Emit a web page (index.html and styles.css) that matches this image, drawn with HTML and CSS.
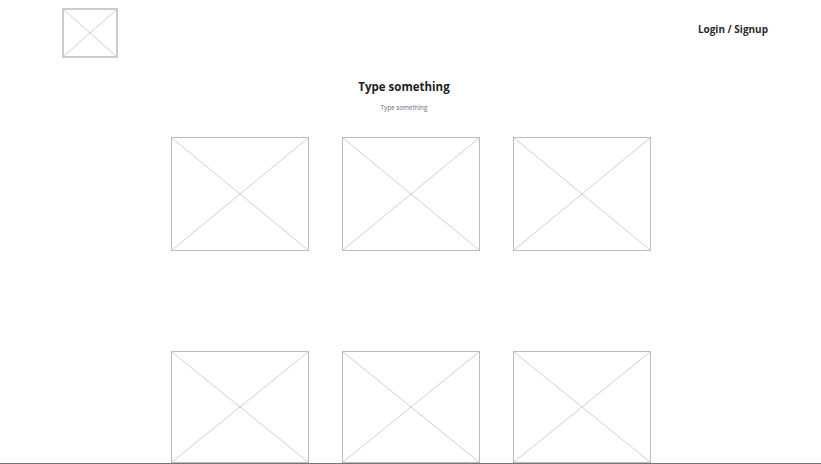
FILE: index.html
```html
<!DOCTYPE html>
<html>
<head>
<meta charset="utf-8">
<link rel="stylesheet" href="styles.css">
</head>
<body>
<header class="header">
  <div class="logo ph">
    <svg viewBox="0 0 100 100" preserveAspectRatio="none"><line x1="0" y1="0" x2="100" y2="100"/><line x1="100" y1="0" x2="0" y2="100"/></svg>
  </div>
  <a class="login">Login / Signup</a>
</header>
<section class="intro">
  <h1 class="title">Type something</h1>
  <p class="sub">Type something</p>
</section>
<section class="grid">
  <div class="card ph"><svg viewBox="0 0 100 100" preserveAspectRatio="none"><line x1="0" y1="0" x2="100" y2="100"/><line x1="100" y1="0" x2="0" y2="100"/></svg></div>
  <div class="card ph"><svg viewBox="0 0 100 100" preserveAspectRatio="none"><line x1="0" y1="0" x2="100" y2="100"/><line x1="100" y1="0" x2="0" y2="100"/></svg></div>
  <div class="card ph"><svg viewBox="0 0 100 100" preserveAspectRatio="none"><line x1="0" y1="0" x2="100" y2="100"/><line x1="100" y1="0" x2="0" y2="100"/></svg></div>
  <div class="card ph low"><svg viewBox="0 0 100 100" preserveAspectRatio="none"><line x1="0" y1="0" x2="100" y2="100"/><line x1="100" y1="0" x2="0" y2="100"/></svg></div>
  <div class="card ph low"><svg viewBox="0 0 100 100" preserveAspectRatio="none"><line x1="0" y1="0" x2="100" y2="100"/><line x1="100" y1="0" x2="0" y2="100"/></svg></div>
  <div class="card ph low"><svg viewBox="0 0 100 100" preserveAspectRatio="none"><line x1="0" y1="0" x2="100" y2="100"/><line x1="100" y1="0" x2="0" y2="100"/></svg></div>
</section>
<div class="rule"></div>
</body>
</html>
```
FILE: styles.css
```css
html, body {
  margin: 0;
  padding: 0;
  background: #fff;
  font-family: "Open Sans", "Noto Sans", sans-serif;
  color: #222;
}
body {
  height: 464px;
  overflow: hidden;
}
.header {
  display: flex;
  justify-content: space-between;
  align-items: flex-start;
  padding: 8px 53px 0 62px;
  height: 58px;
  box-sizing: border-box;
}
.ph {
  box-sizing: border-box;
  border: 1px solid #bcbcbc;
  background: #fff;
}
.ph svg {
  display: block;
  width: 100%;
  height: 100%;
}
.ph line {
  stroke: #cfcfcf;
  stroke-width: 1;
  vector-effect: non-scaling-stroke;
}
.logo {
  width: 56px;
  height: 50px;
  border-width: 2px;
  border-color: #cccccc;
}
.login {
  margin-top: 14px;
  font-size: 10px;
  font-weight: 700;
  color: #2a2a2a;
  line-height: 14px;
}
.intro {
  display: flex;
  flex-direction: column;
  align-items: center;
  padding-top: 20px;
  padding-right: 13px;
}
.title {
  margin: 0;
  font-size: 11.5px;
  font-weight: 700;
  line-height: 17px;
  color: #222;
}
.sub {
  margin: 8px 0 0 0;
  font-size: 6.3px;
  line-height: 10px;
  color: #6a6a8a;
}
.grid {
  display: grid;
  grid-template-columns: repeat(3, 138px);
  column-gap: 33px;
  row-gap: 100px;
  justify-content: center;
  padding-top: 24px;
  padding-left: 1px;
}
.card {
  height: 114px;
}
.card.low {
  height: 112px;
}
.rule {
  height: 1px;
  background: #777;
}
```
